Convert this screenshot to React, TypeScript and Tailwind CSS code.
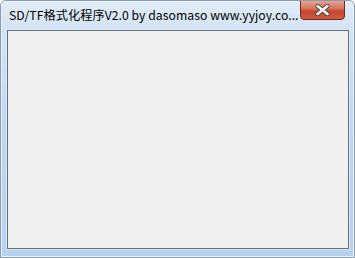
import React from "react";

export default function App() {
  return (
    <div className="w-[355px] h-[258px] relative overflow-hidden bg-[linear-gradient(to_bottom,#e1ecf8_0px,#d3e3f5_30px,#bfd7f1_120px,#b6d1ee_258px)] border border-[#8a9bb0] rounded-t-[6px]">
      <div className="absolute inset-0 rounded-t-[5px] border border-[#eaf2fb] pointer-events-none" />
      <div className="flex flex-col h-full">
        <div className="h-[29px] flex items-start pl-[8px] pt-[6px]">
          <span
            className="text-[12.2px] leading-[16px] tracking-[0.05px] text-black whitespace-nowrap"
            style={{ fontFamily: '"Noto Sans CJK SC", "Noto Sans", sans-serif' }}
          >
            SD/TF格式化程序V2.0 by dasomaso www.yyjoy.co...
          </span>
        </div>
        <div className="ml-[6px] mr-[5px] h-[219px] border border-[#62707e] bg-[#f0f0f0] shadow-[0_0_0_1px_#dde9f6]" />
      </div>
      <div className="absolute top-[-1px] right-[9px] w-[45px] h-[20px] rounded-b-[4px] border border-[#6a2b22] bg-[linear-gradient(to_bottom,#e8a493_0%,#d36e58_45%,#c4452e_55%,#d6583d_100%)] flex items-center justify-center">
        <svg width="15" height="12" viewBox="0 0 15 12">
          <path d="M2.5 2 L12.5 10 M12.5 2 L2.5 10" stroke="#4a4a4a" strokeWidth="4.2" strokeLinecap="round" />
          <path d="M2.5 2 L12.5 10 M12.5 2 L2.5 10" stroke="#ffffff" strokeWidth="2.4" strokeLinecap="round" />
        </svg>
      </div>
    </div>
  );
}
